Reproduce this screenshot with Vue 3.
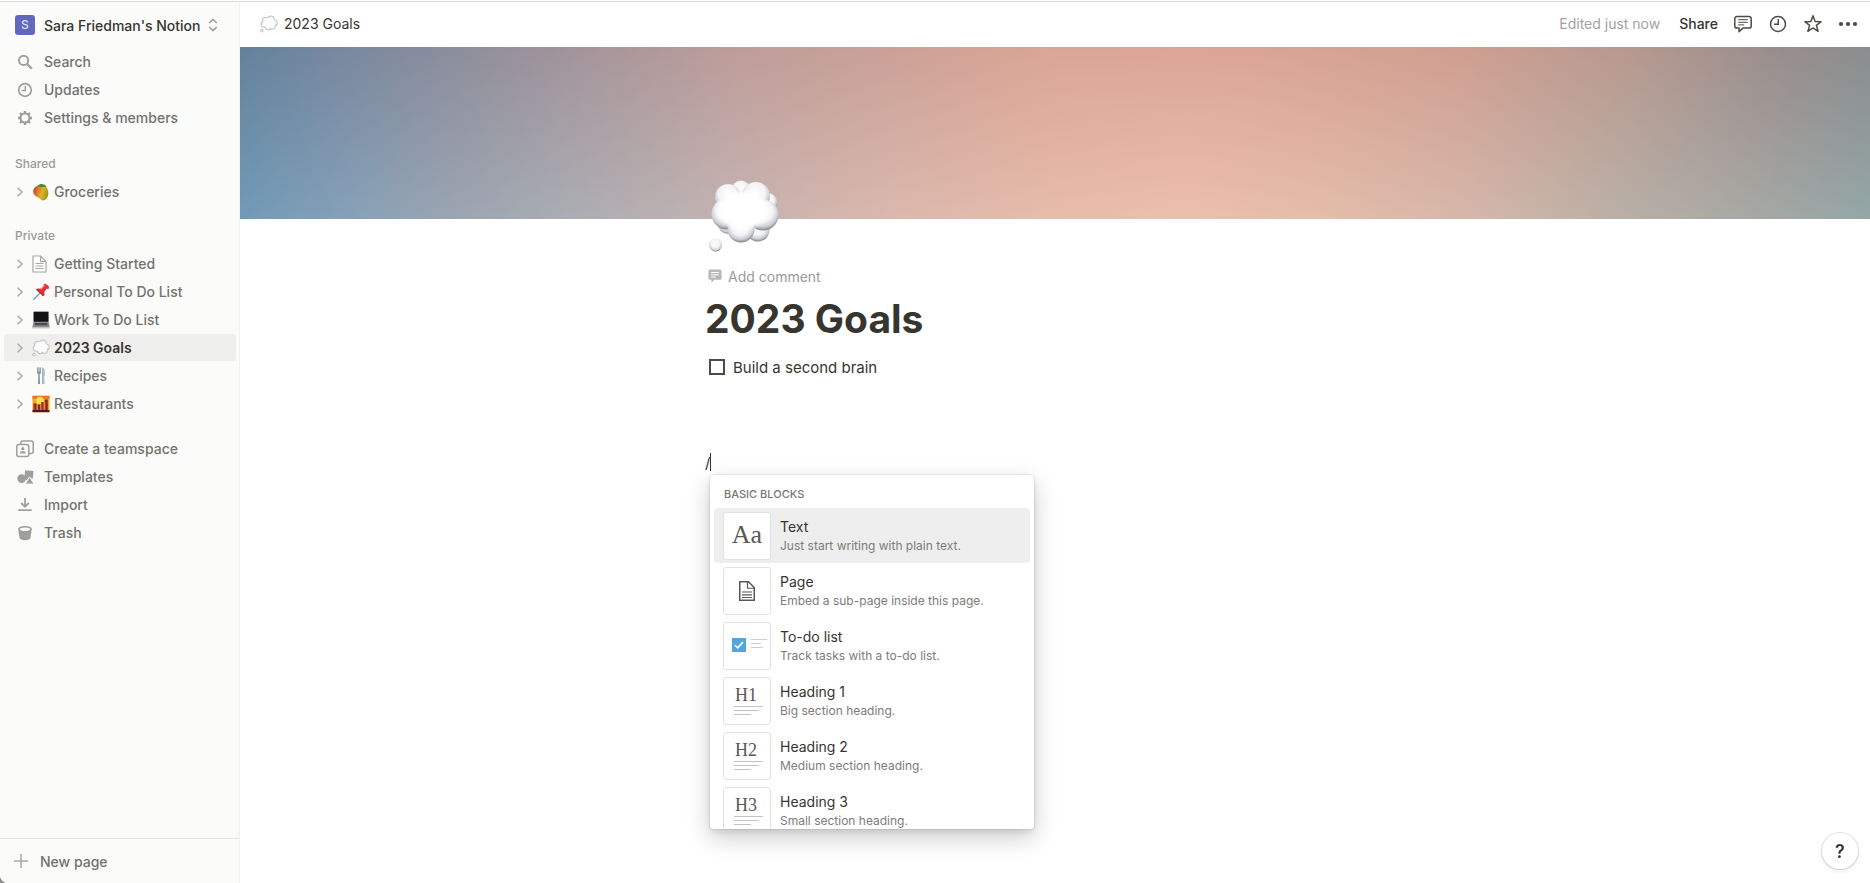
<template>
  <div class="app">
    <!-- sidebar -->
    <aside class="sidebar">
      <button class="workspace">
        <span class="workspace-logo">S</span>
        <span class="workspace-name">Sara Friedman's Notion</span>
        <svg class="updown" viewBox="0 0 10 14" width="10" height="14">
          <path d="M1.2 5 5 1.4 8.8 5M1.2 9 5 12.6 8.8 9" />
        </svg>
      </button>

      <nav class="nav">
        <a v-for="item in topLinks" :key="item.id" href="#" class="row">
          <span class="nav-icon"><svg viewBox="0 0 18 18" width="18" height="18" v-html="icons[item.id]"></svg></span>
          {{ item.label }}
        </a>
      </nav>

      <section v-for="group in groups" :key="group.title" class="group">
        <h2 class="group-title">{{ group.title }}</h2>
        <ul class="tree">
          <li v-for="page in group.pages" :key="page.label" class="row" :class="{ active: page.active }">
            <button class="toggle" :aria-label="'Open ' + page.label">
              <svg viewBox="0 0 12 12" width="12" height="12"><path d="M3.6 1.8 8 6l-4.4 4.2" /></svg>
            </button>
            <a href="#" class="page-link">
              <svg viewBox="0 0 18 18" width="18" height="18" v-html="icons[page.icon]"></svg>
              {{ page.label }}
            </a>
          </li>
        </ul>
      </section>

      <nav class="nav nav-bottom">
        <a v-for="item in bottomLinks" :key="item.id" href="#" class="row">
          <span class="nav-icon"><svg viewBox="0 0 18 18" width="18" height="18" v-html="icons[item.id]"></svg></span>
          {{ item.label }}
        </a>
      </nav>

      <button class="new-page">
        <svg viewBox="0 0 14 14" width="14" height="14"><path d="M7 0v14M0 7h14" /></svg>
        New page
      </button>
    </aside>

    <!-- page -->
    <main class="main">
      <header class="topbar">
        <a href="#" class="crumb">
          <svg viewBox="0 0 18 18" width="18" height="18" v-html="icons.thought"></svg>
          2023 Goals
        </a>
        <div class="actions">
          <span class="edited">Edited just now</span>
          <button class="share">Share</button>
          <button v-for="name in ['comments', 'history', 'star', 'more']" :key="name" class="icon-btn" :aria-label="name">
            <svg viewBox="0 0 20 20" width="20" height="20" v-html="icons[name]"></svg>
          </button>
        </div>
      </header>

      <div class="cover"></div>

      <article class="content">
        <svg class="page-icon" viewBox="0 0 78 78" width="78" height="78">
          <defs>
            <radialGradient id="puff" cx="0.48" cy="0.38" r="0.62">
              <stop offset="0" stop-color="#fff" />
              <stop offset="0.55" stop-color="#f4f4f5" />
              <stop offset="0.82" stop-color="#cbccd0" />
              <stop offset="1" stop-color="#7f8187" />
            </radialGradient>
            <radialGradient id="core" cx="0.5" cy="0.5" r="0.5">
              <stop offset="0" stop-color="#fff" />
              <stop offset="0.75" stop-color="#fff" />
              <stop offset="1" stop-color="#fff" stop-opacity="0" />
            </radialGradient>
          </defs>
          <g fill="url(#puff)">
            <circle cx="36" cy="13" r="9.5" />
            <circle cx="63" cy="25" r="9" />
            <circle cx="23" cy="47" r="10" />
            <circle cx="53" cy="53" r="11.5" />
            <circle cx="23" cy="20" r="13" />
            <circle cx="51" cy="19" r="14" />
            <circle cx="22" cy="37" r="15.5" />
            <circle cx="58" cy="38" r="15.5" />
            <circle cx="36" cy="52" r="13.5" />
            <circle cx="10.5" cy="68" r="6.5" />
          </g>
          <ellipse cx="38" cy="33" rx="28" ry="21" fill="url(#core)" />
        </svg>

        <button class="add-comment">
          <svg viewBox="0 0 14 14" width="14" height="14">
            <path fill="#b9b8b6" d="M2 .5h10A1.600 1.600 0 0 1 13.600 2v7.200A1.600 1.600 0 0 1 12 10.800H6.300L3.400 13.700v-2.900H2A1.600 1.600 0 0 1 .4 9.200V2A1.600 1.600 0 0 1 2 .5z" />
            <path stroke="#fff" d="M3 3.500h8M3 5.800h8M3 8h5" />
          </svg>
          Add comment
        </button>

        <h1 class="title">2023 Goals</h1>

        <label class="todo">
          <input v-model="done" type="checkbox" />
          Build a second brain
        </label>

        <div class="slash-line">
          <span>/</span>
          <span class="caret"></span>

          <div class="menu">
            <h3 class="menu-title">BASIC BLOCKS</h3>
            <button
              v-for="(block, i) in blocks"
              :key="block.name"
              class="block"
              :class="{ selected: i === selected }"
              @mouseenter="selected = i"
            >
              <span class="thumb">
                <svg viewBox="1 1 46 46" width="46" height="46">
                  <text v-if="block.kind === 'text'" x="24" y="31" text-anchor="middle" class="thumb-aa">Aa</text>
                  <g v-else-if="block.kind === 'page'" fill="none" stroke="#5a5955" stroke-width="1.5">
                    <path d="M16.75 14.75h8.75l5.75 5.75v12.75h-14.5z" />
                    <path d="M24.5 14.75v6.5h6.75M19 25h10M19 27.8h10M19 30.5h10" stroke-width="1.2" />
                  </g>
                  <g v-else-if="block.kind === 'todo'">
                    <rect x="9" y="16" width="14" height="14" fill="#51a6de" />
                    <path d="m12 23.2 2.7 2.7 5.3-5.8" fill="none" stroke="#fff" stroke-width="1.6" />
                    <path d="M28 17.5h16M28 21.5h10M28 25.5h12" stroke="#d0cfcd" />
                  </g>
                  <g v-else>
                    <text x="12" y="24" class="thumb-h">{{ block.kind }}</text>
                    <path d="M11 29.5h29M11 33.5h25M11 37.5h17" stroke="#c4c3c1" />
                  </g>
                </svg>
              </span>
              <span class="block-text">
                <span class="block-name">{{ block.name }}</span>
                <span class="block-desc">{{ block.desc }}</span>
              </span>
            </button>
          </div>
        </div>
      </article>
    </main>

    <button class="help" aria-label="Help">?</button>
  </div>
</template>

<script setup>
import { ref } from 'vue'

const done = ref(false)
const selected = ref(0)

const topLinks = [
  { id: 'search', label: 'Search' },
  { id: 'updates', label: 'Updates' },
  { id: 'settings', label: 'Settings & members' },
]

const groups = [
  { title: 'Shared', pages: [{ label: 'Groceries', icon: 'mango' }] },
  {
    title: 'Private',
    pages: [
      { label: 'Getting Started', icon: 'doc' },
      { label: 'Personal To Do List', icon: 'pin' },
      { label: 'Work To Do List', icon: 'laptop' },
      { label: '2023 Goals', icon: 'thought', active: true },
      { label: 'Recipes', icon: 'cutlery' },
      { label: 'Restaurants', icon: 'sunset' },
    ],
  },
]

const bottomLinks = [
  { id: 'teamspace', label: 'Create a teamspace' },
  { id: 'templates', label: 'Templates' },
  { id: 'import', label: 'Import' },
  { id: 'trash', label: 'Trash' },
]

const blocks = [
  { kind: 'text', name: 'Text', desc: 'Just start writing with plain text.' },
  { kind: 'page', name: 'Page', desc: 'Embed a sub-page inside this page.' },
  { kind: 'todo', name: 'To-do list', desc: 'Track tasks with a to-do list.' },
  { kind: 'H1', name: 'Heading 1', desc: 'Big section heading.' },
  { kind: 'H2', name: 'Heading 2', desc: 'Medium section heading.' },
  { kind: 'H3', name: 'Heading 3', desc: 'Small section heading.' },
]

// svg bodies, sidebar ones are 18x18 and topbar ones are 20x20
const icons = {
  search: '<g fill="none" stroke="#a09f9c" stroke-width="2"><circle cx="7.6" cy="7.4" r="4.6"/><path d="m11 11 4.8 4.6" stroke-width="2.4"/></g>',
  updates: '<g fill="none" stroke="#a09f9c" stroke-width="1.7"><circle cx="9" cy="9" r="6.3"/><path d="M9.3 4.8v4.7H5.6" stroke-width="1.4"/></g>',
  settings: '<g fill="none" stroke="#a09f9c"><circle cx="9" cy="9" r="4.5" stroke-width="2.2"/><path stroke-width="2.4" d="M9 2v2.500M9 13.500V16M2 9h2.500M13.500 9H16M4 4l1.700 1.700M12.300 12.300 14 14M4 14l1.700-1.700M12.300 5.700 14 4"/></g>',
  teamspace: '<g fill="none" stroke="#a09f9c" stroke-width="1.5"><rect x=".8" y="4.6" width="12" height="12" rx="2"/><path d="M4.800 4.600V3a2 2 0 0 1 2-2h8.400a2 2 0 0 1 2 2v8.400a2 2 0 0 1-2 2h-2.400"/></g><circle cx="6.8" cy="8.7" r="1.6" fill="#a09f9c"/><path d="M3.800 13.600c0-1.900 1.300-2.600 3-2.600s3 .7 3 2.600z" fill="#a09f9c"/>',
  templates: '<g fill="#a09f9c"><path d="m9 2.300 8.500.6-.6 7.600-2.200-.2-1-1.800-3.200 3.800-2.200-.2z"/><circle cx="5.6" cy="10.6" r="4.3"/><path d="M13.700 9 18 16H9.200z" stroke="#fbfbfa" stroke-width=".8"/></g>',
  import: '<g fill="none" stroke="#a09f9c" stroke-width="1.8"><path d="M9 2v8.500M5.200 7 9 10.700 12.800 7M2.300 14.200h13.400"/></g>',
  trash: '<path fill="#a09f9c" d="M2.200 5c0-1.900 3-3 6.800-3s6.800 1.100 6.800 3l-1.300 9c-.3 1.400-2.600 2.200-5.500 2.200S3.800 15.400 3.500 14z"/><ellipse cx="9" cy="5.300" rx="5" ry="1.8" fill="#fbfbfa"/>',

  mango: '<defs><linearGradient id="mango-skin" x1="0" y1=".3" x2="1" y2=".6"><stop offset="0" stop-color="#c8402b"/><stop offset=".35" stop-color="#d9882a"/><stop offset=".6" stop-color="#dfb321"/><stop offset="1" stop-color="#8c9a1c"/></linearGradient></defs><path d="M1.300 8c-.2 3.500 2 5 4.500 6.200 2.200 1 3.200 3.200 5.200 3.200 3 0 5.500-3.400 5.300-7.400C16.200 5 13 1.800 9 2.100 4.800 2.400 1.600 4.500 1.300 8z" fill="url(#mango-skin)"/><path d="M5.500 2.600c2-2.300 7.500-2.400 9.200 1.600C12 3.400 8.500 5.300 5.500 2.600z" fill="#3f9142"/>',
  doc: '<g fill="none" stroke="#a8a7a4" stroke-width="1.2"><path d="M1 1h7.500L14 6.500V17H1z" fill="#fff"/><path d="M8.500 1v5.500H14M3.500 8.500h8M3.500 11h8M3.500 13.500h8"/></g>',
  pin: '<path d="M1.500 16.800 8 10" stroke="#8d9aa5" stroke-width="1.4"/><path d="M12.300.8c1.700-.4 5.200 2.600 4.900 4.500-.8 1-2 .3-2.700.7l-2.200 3c.3 1.700.4 3.300-.6 4.300L3.800 6.400c1.200-1.100 3-.8 4.500-.6L11.700 3c.3-.8-.3-1.600.6-2.200z" fill="#dc3238"/><path d="M12.500 2.300 9 6.200" stroke="#f58a87" stroke-width="1.2"/><path d="M4.800 6.500 11.300 13" stroke="#ac1c25" stroke-width="1"/>',
  laptop: '<rect x="1.300" y=".5" width="15.500" height="10.500" rx="1" fill="#555"/><rect x="2" y="1" width="14" height="9.500" fill="#141414"/><path d="M1.300 11h15.500l1 5.600H.3z" fill="#8c8c8e"/><path d="M3 12h12.200l.4 2.300H2.600z" fill="#4a4a4c"/><path d="M.3 16.600h17.500v.800H.3z" fill="#bdbdbf"/>',
  thought: '<g fill="#f3f3f4" stroke="#b0b1b5" stroke-width=".8"><circle cx="5.5" cy="5.5" r="3.2"/><circle cx="11" cy="4.300" r="3.400"/><circle cx="14.300" cy="8.200" r="3.100"/><circle cx="4" cy="9.300" r="3"/><circle cx="8.300" cy="11.700" r="3.200"/><circle cx="12.500" cy="11.500" r="3"/><circle cx="1.900" cy="15.600" r="1.300"/></g><ellipse cx="9.200" cy="8" rx="6.200" ry="5" fill="#fcfcfc"/>',
  cutlery: '<path d="M5 .5v4.500c0 1.500.8 2 1.300 2.300L6 17h2l-.3-9.700C8.400 7 9 6.500 9 5V.5" fill="#8496a7"/><path d="M6.200.5v4M7.700.5v4" stroke="#eef2f5" stroke-width=".6"/><path d="M10.500.5c2 0 2.800 3 2.500 8.500h-.7l.3 8h-2z" fill="#b5c3d0"/><path d="M10.500.5v16.500" stroke="#7d8d9b" stroke-width=".6"/>',
  sunset: '<rect x=".5" y=".8" width="17" height="16.400" fill="#f6a521"/><path d="M.5.8h17v3H.5z" fill="#e9781b"/><circle cx="8" cy="5.500" r="3.800" fill="#ffe24a"/><path d="M1.500 17V8.500h3V17zM5.800 17V9.500h2.400V17zM9.300 17V7h2.200v10zM12.800 17V4.500h3V17z" fill="#8a2230"/><path d="M2.200 10v5M10 9v6M13.500 6.500v8" stroke="#d8492a" stroke-width=".7"/><path d="M.5 15h17v2.200H.5z" fill="#4d1630"/>',

  comments: '<g fill="none" stroke="#4c4b47" stroke-width="1.5" stroke-linejoin="round"><path d="M4 2.500h12a2.200 2.200 0 0 1 2.200 2.200v7.200a2.200 2.200 0 0 1-2.200 2.200H10L6 17.800v-3.700H4a2.200 2.200 0 0 1-2.200-2.200V4.700A2.200 2.200 0 0 1 4 2.500z"/><path d="M5.200 5.700h9.600M5.200 8.300h9.600M5.200 10.900h6" stroke-width="1"/></g>',
  history: '<g fill="none" stroke="#4c4b47" stroke-width="1.5"><circle cx="10" cy="10" r="7.5"/><path d="M10.300 5v5.300H6"/></g>',
  star: '<path d="m10 1.800 2.100 5.700 6 .2-4.700 3.700 1.700 5.900-5.100-3.400-5.100 3.400 1.700-5.900L1.900 7.700l6-.2z" fill="none" stroke="#4c4b47" stroke-width="1.5" stroke-linejoin="round"/>',
  more: '<g fill="#4c4b47"><circle cx="3" cy="10" r="2.1"/><circle cx="10" cy="10" r="2.1"/><circle cx="17" cy="10" r="2.1"/></g>',
}
</script>

<style>
body {
  margin: 0;
  background: #8f8f8e;
}
</style>

<style scoped>
.app {
  display: flex;
  height: 100vh;
  box-sizing: border-box;
  padding-top: 1px;
  background: #fff;
  border-bottom-left-radius: 8px;
  overflow: hidden;
  font-family: Inter, "Liberation Sans", sans-serif;
  font-size: 14px;
  color: #37352f;
}
button {
  padding: 0;
  border: none;
  background: transparent;
  font: inherit;
  color: inherit;
  text-align: left;
  cursor: pointer;
}
a { color: inherit; text-decoration: none; }
svg { flex: none; display: block; }

/* sidebar */
.sidebar {
  display: flex;
  flex-direction: column;
  flex: none;
  width: 240px;
  box-sizing: border-box;
  border-top: 1px solid #d9dada;
  border-right: 1px solid #f1f1ef;
  background: #fbfbfa;
  color: #73726e;
  font-weight: 500;
}
.workspace {
  display: flex;
  align-items: center;
  height: 46px;
  padding-left: 15px;
  color: #37352f;
}
.workspace-logo {
  width: 20px;
  margin-right: 9px;
  border-radius: 3px;
  background: #6068bf;
  color: #dcdef3;
  font-size: 12px;
  line-height: 20px;
  text-align: center;
}
.updown {
  margin-left: 8px;
  fill: none;
  stroke: #a09f9c;
  stroke-width: 1.5;
}
.row {
  display: flex;
  align-items: center;
  height: 27px;
  margin: 0 3px 1px 4px;
  padding-left: 10px;
  border-radius: 3px;
}
.row.active {
  background: #efefee;
  color: #37352f;
  font-weight: 600;
}
.nav-icon {
  display: flex;
  justify-content: center;
  width: 22px;
  margin-right: 8px;
}
.group { margin-top: 18px; }
.nav + .group { margin-top: 20px; }
.group-title {
  margin: 0 0 2px;
  padding-left: 15px;
  color: #9b9a97;
  font-size: 12px;
  font-weight: 500;
  line-height: 24px;
}
.tree { margin: 0; padding: 0; list-style: none; }
.toggle { margin-right: 6px; }
.toggle svg {
  fill: none;
  stroke: #adaba8;
  stroke-width: 1.5;
}
.page-link {
  display: flex;
  flex: 1;
  align-items: center;
  gap: 4px;
}
.nav-bottom { margin-top: 17px; }
.new-page {
  display: flex;
  align-items: center;
  gap: 12px;
  height: 45px;
  margin-top: auto;
  padding-left: 14px;
  border-top: 1px solid #e6e6e4;
}
.new-page svg { stroke: #a9a8a5; stroke-width: 1.5; }

/* top bar */
.main {
  flex: 1;
  min-width: 0;
  border-top: 1px solid #d9dada;
}
.topbar {
  display: flex;
  align-items: center;
  justify-content: space-between;
  height: 45px;
  box-sizing: border-box;
  padding: 0 12px 2px 20px;
}
.crumb { display: flex; align-items: center; gap: 6px; }
.actions { display: flex; align-items: center; gap: 15px; }
.edited { margin-right: 4px; color: #a3a29f; }
.share { font-weight: 500; }

/* the two colour strips are blended from top to bottom */
.cover {
  height: 172px;
  background: linear-gradient(to right, #64829b, #75879f 5%, #8c8e9c 13%, #a2949b 20%, #bd9d9a 30%, #cba197 40%, #dba695 50%, #dba595 62%, #cf9f91 75%, #b8998f 85%, #978d8d 95%, #8b8d8e);
}
.cover::before {
  content: '';
  display: block;
  height: 100%;
  background: linear-gradient(to right, #709ab8, #8ba2b7 8%, #9ba5b2 13%, #aaadb3 20%, #c4b3b1 30%, #dbb8ad 40%, #e6bcab 50%, #ebc0ac 58%, #e3bcaa 67%, #d6b7aa 75%, #b8afa6 85%, #a6a8a4 93%, #94a7a7);
  -webkit-mask-image: linear-gradient(to bottom, transparent, #000);
  mask-image: linear-gradient(to bottom, transparent, #000);
}

/* page body */
.content {
  display: flex;
  flex-direction: column;
  align-items: flex-start;
  max-width: 700px;
  margin: 0 auto;
}
.page-icon { position: relative; margin-top: -42px; }
.add-comment {
  display: flex;
  align-items: center;
  gap: 6px;
  height: 24px;
  margin-top: 9px;
  padding-left: 3px;
  color: #9b9a97;
}
.title {
  margin: 7px 0 9px;
  font-size: 39px;
  font-weight: 700;
  line-height: 48px;
}
.todo {
  display: flex;
  align-items: center;
  gap: 8px;
  height: 30px;
  padding-left: 4px;
  font-size: 15px;
}
.todo input {
  appearance: none;
  width: 16px;
  height: 16px;
  margin: 0;
  border: 2px solid #4c4b46;
}
.todo input:checked { background: #51a6de; border-color: #51a6de; }
.slash-line {
  position: relative;
  display: flex;
  align-items: center;
  height: 30px;
  margin-top: 65px;
  font-size: 15px;
}
.caret { width: 1px; height: 18px; background: #37352f; }

/* block menu */
.menu {
  position: absolute;
  top: 28px;
  left: 5px;
  width: 324px;
  height: 354px;
  box-sizing: border-box;
  padding: 0 4px;
  overflow: hidden;
  border-radius: 4px;
  background: #fff;
  box-shadow: 0 0 0 1px rgba(15, 15, 15, 0.06), 0 3px 6px rgba(15, 15, 15, 0.1), 0 9px 24px rgba(15, 15, 15, 0.2);
}
.menu-title {
  margin: 7px 0 2px;
  padding-left: 10px;
  color: #787774;
  font-size: 11px;
  font-weight: 500;
  line-height: 24px;
}
.block {
  display: flex;
  align-items: center;
  gap: 9px;
  width: 100%;
  height: 55px;
  padding-left: 9px;
  border-radius: 3px;
}
.block.selected { background: #eeeeee; }
.thumb {
  border: 1px solid #e1e1df;
  border-radius: 3px;
  background: #fff;
}
.thumb-aa, .thumb-h {
  fill: #5a5955;
  font-family: "Liberation Serif", serif;
  font-weight: 400;
}
.thumb-aa { font-size: 26px; }
.thumb-h { font-size: 18px; }
.block-text { display: flex; flex-direction: column; }
.block-name { font-size: 14px; line-height: 20px; }
.block-desc {
  color: #7d7c78;
  font-size: 12px;
  line-height: 18px;
}

.help {
  position: fixed;
  right: 12px;
  bottom: 14px;
  width: 36px;
  height: 36px;
  border-radius: 50%;
  background: #fff;
  box-shadow: 0 0 0 1px rgba(15, 15, 15, 0.12), 0 2px 4px rgba(15, 15, 15, 0.1);
  font-size: 18px;
  font-weight: 600;
  text-align: center;
}
</style>
